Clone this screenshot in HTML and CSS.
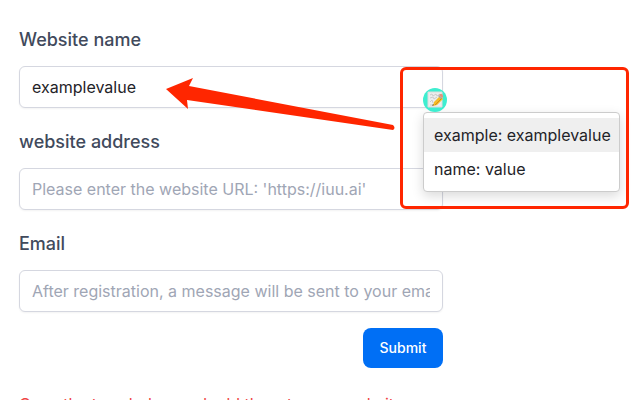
FILE: index.html
```html
<!DOCTYPE html>
<html lang="en">
<head>
	<meta charset="UTF-8">
	<title>Submit website</title>
	<link rel="stylesheet" href="styles.css">
</head>
<body>
	<div class="page">
		<form class="form">
			<div class="field">
				<label for="name">Website name</label>
				<input type="text" id="name" value="examplevalue">
				<div class="helper">
					<svg class="helper-icon" viewBox="0 0 24 24" aria-hidden="true">
						<circle cx="12" cy="12" r="12" fill="#3eeed0"/>
						<path d="M5 4h14v15H5z" fill="#ededed" stroke="#dcdcdc"/>
						<path d="M7 7l2-1 1 2 3-2 1 2 3-2M7 10l3-1 1 2 3-2M7 14l2-2 1 3M7 17h3" fill="none" stroke="#ccc"/>
						<path d="M10 18l1-4 6-6 3 3-6 6z" fill="#f6bd25"/>
						<path d="M12 17l7-7" stroke="#d88b16"/>
						<path d="M17 6q3-1 3 3l-1 1-3-3z" fill="#e8917c"/>
						<path d="M16 7l3 3-1 1-3-3z" fill="#aaa"/>
						<path d="M9 18l1-2 1 1z" fill="#665030"/>
					</svg>
					<ul class="menu">
						<li class="on">example: examplevalue</li>
						<li>name: value</li>
					</ul>
				</div>
				<div class="mark"></div>
				<svg class="arrow" viewBox="0 0 230 54" aria-hidden="true">
					<path d="M0 11L27 0l-4 8L227 47q3 3 0 5L21 22l1 9z" fill="#ff2600"/>
				</svg>
			</div>
			<div class="field">
				<label for="url">website address</label>
				<input type="text" id="url" placeholder="Please enter the website URL: 'https://iuu.ai'">
			</div>
			<div class="field">
				<label for="email">Email</label>
				<input type="email" id="email" placeholder="After registration, a message will be sent to your email">
			</div>
			<button type="submit" class="submit">Submit</button>
		</form>
		<p class="tip">Copy the tags below and add them to your website</p>
	</div>
</body>
</html>
```

FILE: styles.css
```css
*{margin: 0;padding: 0;box-sizing: border-box;}
body{font-family: Inter, "Liberation Sans", sans-serif;font-size: 16px;line-height: 24px;background: #fff;color: #1f2328;}
.page{height: 100vh;padding: 26px 20px 0 19px;overflow: hidden;}
.form{display: flex;flex-direction: column;gap: 20px;width: 100%;max-width: 424px;}
.field{position: relative;display: flex;flex-direction: column;gap: 12px;}
.field label{font-size: 18px;line-height: 28px;font-weight: 500;color: #414a5c;}
.field input{width: 100%;height: 42px;padding: 0 12px;border: 1px solid #d5d7e0;border-radius: 6px;background: #fff;color: #1f2328;font: inherit;box-shadow: 0 1px 2px rgba(0,0,0,.05);}
.field input::placeholder{color: #9fa6b5;opacity: 1;}
.submit{align-self: flex-end;width: 80px;height: 40px;margin-top: -4px;border: 0;border-radius: 8px;background: #006ff5;color: #fff;font: 500 14px/20px Inter, sans-serif;cursor: pointer;}
.tip{margin-top: 24px;color: #ef4444;}

/* autofill helper on the first field */
.helper{position: absolute;z-index: 1;top: 62px;left: calc(100% - 20px);}
.helper-icon{display: block;width: 24px;height: 24px;}
.menu{width: 197px;padding: 5px 0;list-style: none;background: #fff;border: 1px solid #ccc;border-radius: 4px;box-shadow: 0 4px 12px rgba(0,0,0,.15);}
.menu li{padding: 5px 10px;cursor: pointer;white-space: nowrap;}
.menu .on{background: #efefef;}

/* red annotations */
.mark{position: absolute;z-index: 2;top: 41px;left: calc(100% - 43px);width: 229px;height: 142px;border: 3px solid #ff2600;border-radius: 6px;pointer-events: none;}
.arrow{position: absolute;z-index: 2;top: 52px;left: 147px;width: 230px;height: 54px;pointer-events: none;}
```
